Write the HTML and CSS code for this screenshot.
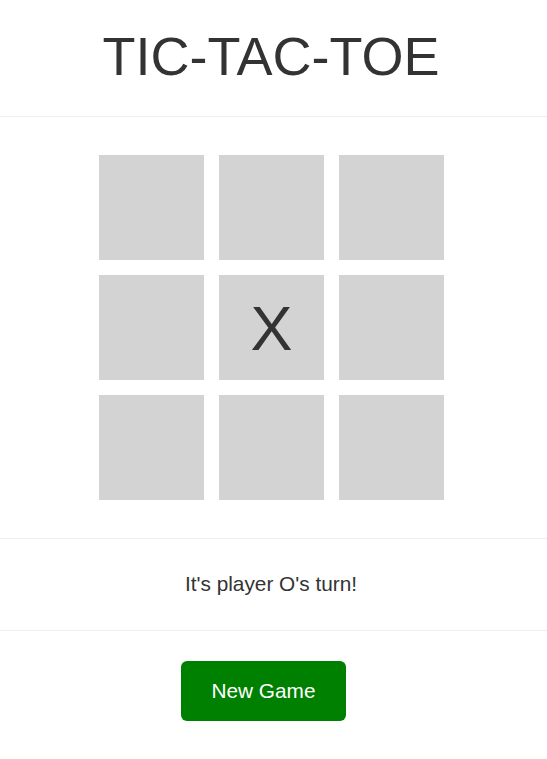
FILE: index.html
```html
<!DOCTYPE html>
<html>
<head>
<meta charset="utf-8">
<link rel="stylesheet" href="styles.css">
</head>
<body>
<header class="header">
  <h1 class="title">TIC-TAC-TOE</h1>
</header>
<section class="board-wrap">
  <div class="board">
    <div class="cell"></div>
    <div class="cell"></div>
    <div class="cell"></div>
    <div class="cell"></div>
    <div class="cell">X</div>
    <div class="cell"></div>
    <div class="cell"></div>
    <div class="cell"></div>
    <div class="cell"></div>
  </div>
</section>
<section class="status">It's player O's turn!</section>
<section class="actions">
  <button class="new-game">New Game</button>
</section>
</body>
</html>
```
FILE: styles.css
```css
html, body {
  margin: 0;
  padding: 0;
  background: #fff;
  font-family: "Liberation Sans", Arial, sans-serif;
  color: #333;
}
.header {
  padding: 24px 5px 28px 0;
  border-bottom: 1px solid #eee;
  text-align: center;
}
.title {
  margin: 0;
  font-size: 54px;
  font-weight: normal;
  line-height: 64px;
}
.board-wrap {
  padding: 38px 4px 38px 0;
  border-bottom: 1px solid #eee;
  display: flex;
  justify-content: center;
}
.board {
  display: grid;
  grid-template-columns: repeat(3, 105px);
  grid-template-rows: repeat(3, 105px);
  gap: 15px;
}
.cell {
  background: #d3d3d3;
  display: flex;
  align-items: center;
  justify-content: center;
  font-size: 63px;
  color: #333;
}
.status {
  padding: 33px 5px 34px 0;
  border-bottom: 1px solid #eee;
  text-align: center;
  font-size: 20.8px;
  line-height: 24px;
}
.actions {
  padding: 30px 20px 0 0;
  display: flex;
  justify-content: center;
}
.new-game {
  width: 165px;
  height: 60px;
  border: none;
  border-radius: 6px;
  background: #008000;
  color: #fff;
  font-family: "Liberation Sans", Arial, sans-serif;
  font-size: 20.8px;
  padding: 0;
}
```
